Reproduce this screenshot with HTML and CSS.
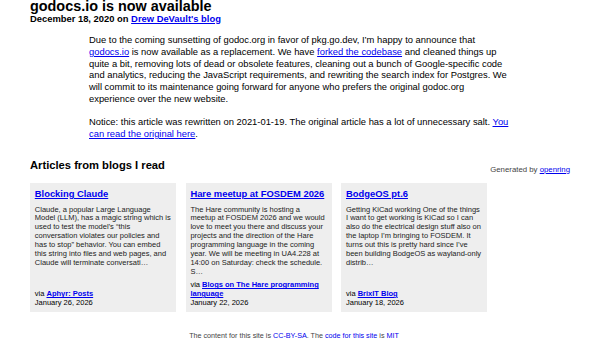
FILE: index.html
```
<!DOCTYPE html>
<html lang="en">
<head>
<meta charset="utf-8">
<title>godocs.io is now available</title>
<link rel="stylesheet" href="styles.css">
</head>
<body>
<div class="page">
  <header class="post-header">
    <h1 class="post-title">godocs.io is now available</h1>
    <p class="post-meta">December 18, 2020 on <a href="#">Drew DeVault's blog</a></p>
  </header>
  <article class="post-body">
    <p>Due to the coming sunsetting of godoc.org in favor of pkg.go.dev, I’m happy to announce that <a href="#">godocs.io</a> is now available as a replacement. We have <a href="#">forked the codebase</a> and cleaned things up quite a bit, removing lots of dead or obsolete features, cleaning out a bunch of Google-specific code and analytics, reducing the JavaScript requirements, and rewriting the search index for Postgres. We will commit to its maintenance going forward for anyone who prefers the original godoc.org experience over the new website.</p>
    <p>Notice: this article was rewritten on 2021-01-19. The original article has a lot of unnecessary salt. <a href="#">You can read the original here</a>.</p>
  </article>
  <section class="webring">
    <div class="webring-head">
      <h3 class="webring-title">Articles from blogs I read</h3>
      <p class="attribution">Generated by <a href="#">openring</a></p>
    </div>
    <div class="articles">
      <div class="article">
        <h4 class="article-title"><a href="#">Blocking Claude</a></h4>
        <p class="summary">Claude, a popular Large Language Model (LLM), has a magic string which is used to test the model’s “this conversation violates our policies and has to stop” behavior. You can embed this string into files and web pages, and Claude will terminate conversati…</p>
        <div class="source">via <a href="#">Aphyr: Posts</a></div>
        <div class="date">January 26, 2026</div>
      </div>
      <div class="article">
        <h4 class="article-title"><a href="#">Hare meetup at FOSDEM 2026</a></h4>
        <p class="summary">The Hare community is hosting a meetup at FOSDEM 2026 and we would love to meet you there and discuss your projects and the direction of the Hare programming language in the coming year. We will be meeting in UA4.228 at 14:00 on Saturday: check the schedule. S…</p>
        <div class="source">via <a href="#">Blogs on The Hare programming language</a></div>
        <div class="date">January 22, 2026</div>
      </div>
      <div class="article">
        <h4 class="article-title"><a href="#">BodgeOS pt.6</a></h4>
        <p class="summary">Getting KiCad working One of the things I want to get working is KiCad so I can also do the electrical design stuff also on the laptop I’m bringing to FOSDEM. It turns out this is pretty hard since I’ve been building BodgeOS as wayland-only distrib…</p>
        <div class="source">via <a href="#">BrixIT Blog</a></div>
        <div class="date">January 18, 2026</div>
      </div>
    </div>
  </section>
  <footer class="site-footer">
    The content for this site is <a href="#">CC-BY-SA</a>. The <a href="#">code for this site</a> is <a href="#">MIT</a>
  </footer>
</div>
</body>
</html>
```

FILE: styles.css
```
html, body {
  margin: 0;
  padding: 0;
  background: #fff;
}

body {
  font-family: "Liberation Sans", Arial, sans-serif;
  color: #000;
  font-size: 9.4px;
}

a {
  color: #0000ee;
}

.page {
  width: 540px;
  padding: 0 30px;
}

.post-header {
  margin-top: 0;
}

.post-title {
  margin: 0;
  font-size: 14.4px;
  line-height: 13px;
  font-weight: bold;
}

.post-meta {
  margin: 0;
  font-size: 9.4px;
  line-height: 11px;
  font-weight: bold;
}

.post-body {
  margin: 10.3px 0 0 59px;
  width: 422px;
}

.post-body p {
  margin: 0 0 11.67px;
  font-size: 9.4px;
  line-height: 11.67px;
}

.webring {
  margin-top: 20px;
}

.webring-head {
  display: flex;
  justify-content: space-between;
  align-items: flex-start;
}

.webring-title {
  margin: 0;
  font-size: 11.2px;
  line-height: 13px;
  font-weight: bold;
}

.attribution {
  margin: 5.5px 0 0;
  font-size: 7.8px;
  line-height: 9.2px;
  color: #444;
}

.articles {
  display: flex;
  align-items: stretch;
  gap: 9.6px;
  margin-top: 8.7px;
}

.article {
  flex: 0 0 146px;
  box-sizing: border-box;
  display: flex;
  flex-direction: column;
  padding: 4.8px;
  background: #eee;
}

.article-title {
  margin: 0;
  font-size: 9.4px;
  line-height: 11px;
  font-weight: bold;
}

.summary {
  flex: 1 0 auto;
  margin: 7px 0 4.5px;
  font-size: 7.5px;
  line-height: 8.9px;
  color: #222;
}

.source,
.date {
  font-size: 7.5px;
  line-height: 8.8px;
}

.source a {
  font-weight: bold;
}

.site-footer {
  margin: 18.5px 12px 0 0;
  text-align: center;
  font-size: 7.2px;
  line-height: 9px;
  color: #444;
}
```
